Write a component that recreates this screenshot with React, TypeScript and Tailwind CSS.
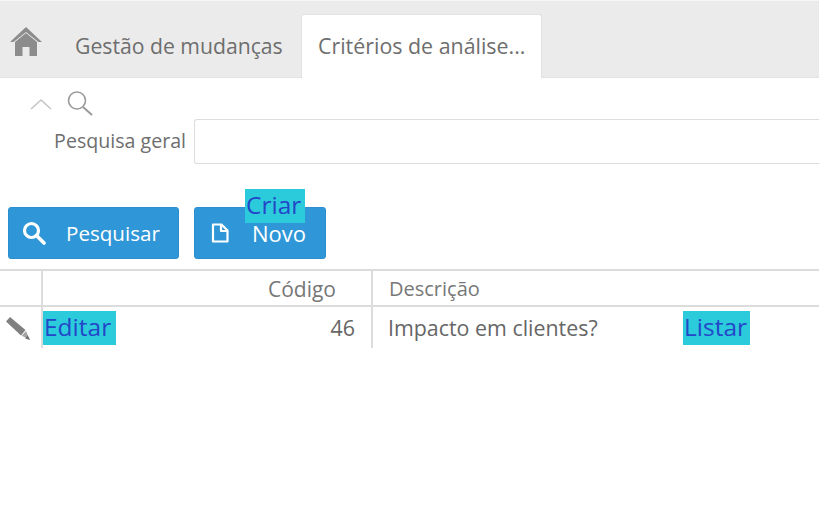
function HomeIcon() {
  return (
    <svg width="32" height="29" viewBox="0 0 32 29" fill="#8c8c8c">
      <path d="M16 0 L32 15 L28.5 15 L16 5 L3.5 15 L0 15 Z" />
      <path d="M16 6 L27 15 L27 29 L19.5 29 L19.5 20 L12.5 20 L12.5 29 L5 29 L5 15 Z" />
    </svg>
  );
}

function PencilIcon() {
  return (
    <svg width="26" height="26" viewBox="0 0 26 26">
      <path d="M1 6.5 L5 2 L20.5 15 L16 20.5 Z" fill="#808080" />
      <path d="M16.8 20.8 L21 16 L25 25 Z" fill="#a4a4a4" />
      <path d="M22.6 20.5 L25 25 L20.2 23.6 Z" fill="#707070" />
    </svg>
  );
}

function LoupeIcon() {
  return (
    <svg width="24" height="24" viewBox="0 0 24 24" fill="none" stroke="white">
      <circle cx="9.5" cy="9.5" r="7" strokeWidth="3.2" />
      <path d="M14.5 14.5 L22 22" strokeWidth="3.6" strokeLinecap="round" />
    </svg>
  );
}

function DocIcon() {
  return (
    <svg width="18" height="20" viewBox="0 0 18 20" fill="none" stroke="white" strokeWidth="2.2" strokeLinejoin="round">
      <path d="M2 1.5 L10.5 1.5 L16.5 7.5 L16.5 18.5 L2 18.5 Z" />
      <path d="M10 1.5 L10 8 L16.5 8" />
    </svg>
  );
}

function Highlight({ children, className }: { children: React.ReactNode; className: string }) {
  return (
    <span className={"absolute bg-[#2bcbdc] text-[#2347c8] text-[24.5px] leading-[32px] pl-[1px] " + className}>
      {children}
    </span>
  );
}

export default function App() {
  return (
    <div className="relative h-[518px] w-[819px] overflow-hidden bg-white text-[#666666] font-['Open_Sans','Noto_Sans',sans-serif]">
      {/* tab strip */}
      <div className="flex h-[78px] items-end border-t border-[#f6f6f6] border-b border-b-[#e2e2e2] bg-[#ebebeb]">
        <div className="flex h-[63px] w-[75px] items-start pl-[10px] pt-[13px]">
          <HomeIcon />
        </div>
        <div className="flex h-[63px] w-[226px] items-center text-[21.2px] text-[#6e6e6e]">Gestão de mudanças</div>
        <div className="-mb-px flex h-[64px] w-[241px] items-center rounded-t-[3px] border border-b-0 border-[#e2e2e2] bg-white pl-[16px] text-[21.4px] text-[#6e6e6e]">
          Critérios de análise...
        </div>
      </div>

      {/* filtro */}
      <div className="flex h-[41px] items-center pl-[30px] pt-[10px]">
        <svg width="22" height="12" viewBox="0 0 22 12" fill="none" stroke="#c4c4c4" strokeWidth="1.5">
          <path d="M1 11 L11 2 L21 11" />
        </svg>
        <svg className="ml-[14px]" width="28" height="28" viewBox="0 0 28 28" fill="none" stroke="#9a9a9a" strokeWidth="1.6">
          <circle cx="11" cy="10.5" r="8.5" />
          <path d="M17 17 L26 25" strokeWidth="2" />
        </svg>
      </div>
      <div className="flex h-[45px] items-center">
        <label className="w-[194px] pb-[2px] pr-[8px] text-right text-[19.6px] text-[#6e6e6e]">Pesquisa geral</label>
        <div className="h-[45px] flex-1 rounded-l-[3px] border border-r-0 border-[#dddddd] bg-white" />
      </div>

      {/* botoes */}
      <div className="flex gap-[15px] pl-[8px] pt-[43px]">
        <button className="flex h-[52px] w-[171px] items-center rounded-[3px] border border-[#2a8fcf] bg-[#2f97d8] pl-[13px] text-[20.6px] text-white">
          <LoupeIcon />
          <span className="ml-[20px]">Pesquisar</span>
        </button>
        <button className="flex h-[52px] w-[132px] items-center rounded-[3px] border border-[#2a8fcf] bg-[#2f97d8] pl-[16px] text-[22px] text-white">
          <DocIcon />
          <span className="ml-[23px]">Novo</span>
        </button>
      </div>

      {/* tabela */}
      <div className="mt-[10px] grid grid-cols-[43px_330px_1fr] text-[20px]">
        <div className="h-[38px] border-t-2 border-b-2 border-r-2 border-[#dcdcdc]" />
        <div className="flex h-[38px] items-center justify-end border-t-2 border-b-2 border-r-2 border-[#dcdcdc] pr-[35px] pt-[3px] text-[21px] text-[#777777]">Código</div>
        <div className="flex h-[38px] items-center border-t-2 border-b-2 border-[#dcdcdc] pl-[16px] pt-[2px] text-[#777777]">Descrição</div>
        <div className="flex h-[41px] items-center border-r-2 border-[#dcdcdc] pl-[5px]">
          <PencilIcon />
        </div>
        <div className="flex h-[41px] items-center justify-end border-r-2 border-[#dcdcdc] pr-[16px] pt-[2px] text-[21.4px]">46</div>
        <div className="flex h-[41px] items-center pl-[15px] pt-[2px] text-[21.4px]">Impacto em clientes?</div>
      </div>

      {/* anotacoes sobre a tela */}
      <Highlight className="left-[245px] top-[189px] h-[34px] w-[60px]">Criar</Highlight>
      <Highlight className="left-[43px] top-[311px] h-[34px] w-[73px]">Editar</Highlight>
      <Highlight className="left-[683px] top-[311px] h-[34px] w-[67px]">Listar</Highlight>
    </div>
  );
}
